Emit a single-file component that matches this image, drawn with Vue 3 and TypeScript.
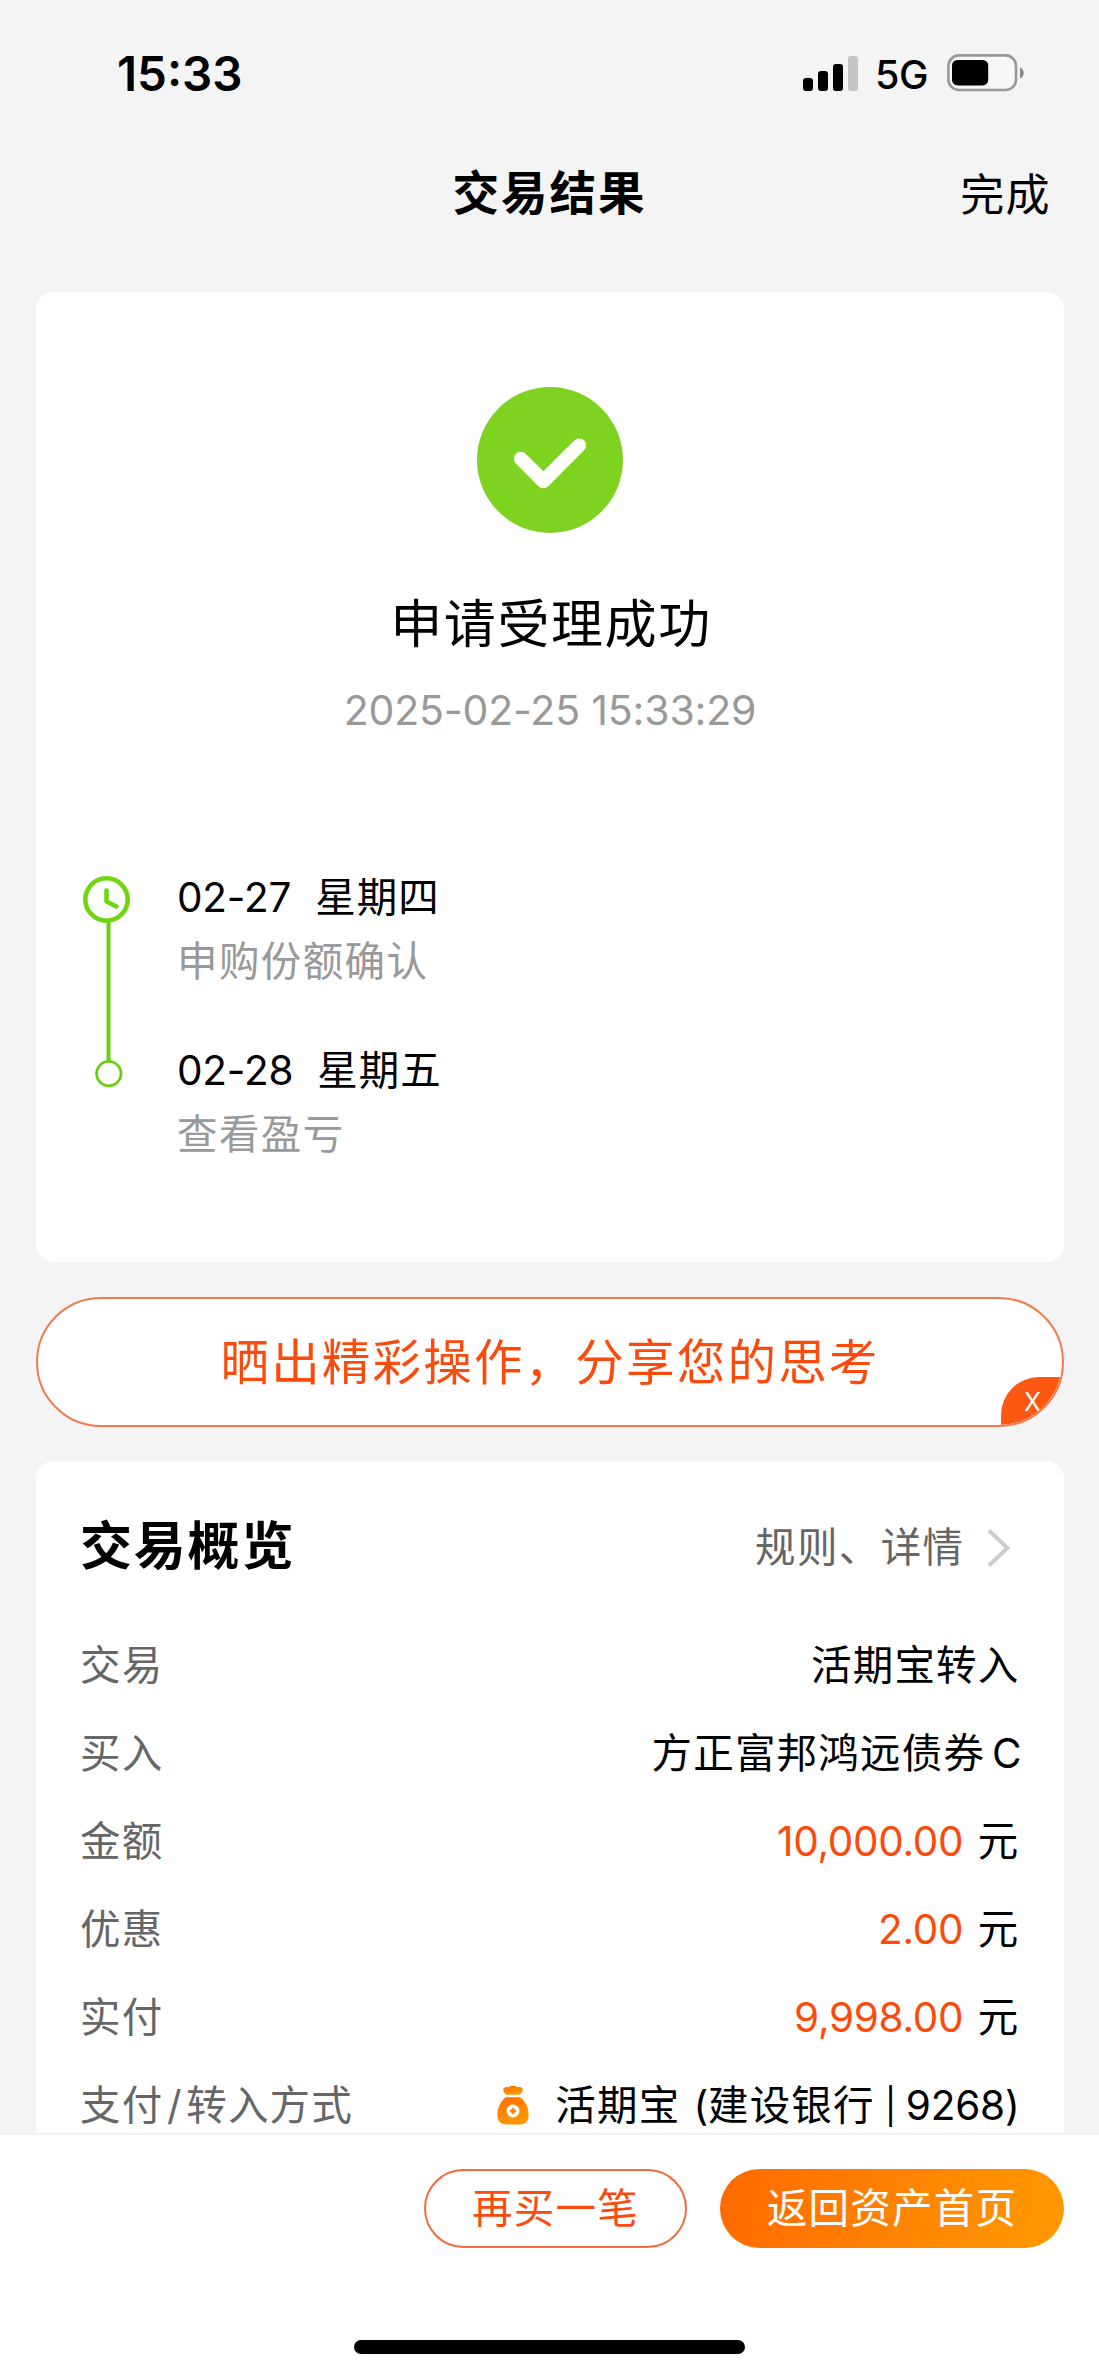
<script setup lang="ts">
interface Step {
  date: string
  weekday: string
  note: string
}

interface Row {
  label: string
  value?: string
  latin?: string
  amount?: string
}

const bars = [13, 20, 27, 35]

const steps: Step[] = [
  { date: '02-27', weekday: '星期四', note: '申购份额确认' },
  { date: '02-28', weekday: '星期五', note: '查看盈亏' },
]

const rows: Row[] = [
  { label: '交易', value: '活期宝转入' },
  { label: '买入', value: '方正富邦鸿远债券', latin: 'C' },
  { label: '金额', amount: '10,000.00' },
  { label: '优惠', amount: '2.00' },
  { label: '实付', amount: '9,998.00' },
]
</script>

<template>
  <div class="screen">
    <header class="status">
      <span class="time">15:33</span>
      <div class="status-right">
        <div class="signal">
          <i v-for="h in bars" :key="h" :style="{ height: h + 'px' }"></i>
        </div>
        <span class="net">5G</span>
        <svg class="battery" width="78" height="38" viewBox="0 0 78 38">
          <rect x="1.4" y="1.4" width="67.6" height="34.6" rx="10.5" fill="#f7f7f7" stroke="#999" stroke-width="2.6" />
          <rect x="5" y="6" width="36.2" height="25.4" rx="5.5" fill="#000" />
          <path d="M73 13.5c5 1.6 5 9.4 0 11z" fill="#8c8c8c" />
        </svg>
      </div>
    </header>

    <nav class="nav">
      <h1>交易结果</h1>
      <a class="done">完成</a>
    </nav>

    <main class="content">
      <section class="card result">
        <svg class="check" width="146" height="146" viewBox="0 0 440 440">
          <circle cx="220" cy="220" r="220" fill="#7ed321" />
          <path d="M132 216L200 284L308 176" fill="none" stroke="#fff" stroke-width="42" stroke-linecap="round" stroke-linejoin="round" />
        </svg>
        <h2>申请受理成功</h2>
        <time>2025-02-25 15:33:29</time>

        <div class="timeline">
          <svg class="track" width="48" height="214" viewBox="0 0 48 214">
            <path d="M25.5 46V186" stroke="#69cf12" stroke-width="4" />
            <circle cx="23.5" cy="23.5" r="21.2" fill="#fff" stroke="#70d60f" stroke-width="4.6" />
            <path d="M23.5 14.5V25.5L33.5 30.5" fill="none" stroke="#70d60f" stroke-width="4.6" stroke-linecap="round" stroke-linejoin="round" />
            <circle cx="25.8" cy="197.6" r="12.2" fill="#fff" stroke="#69cf12" stroke-width="2.8" />
          </svg>
          <ol>
            <li v-for="s in steps" :key="s.date">
              <div class="when"><span class="latin">{{ s.date }}</span><span class="weekday">{{ s.weekday }}</span></div>
              <div class="note">{{ s.note }}</div>
            </li>
          </ol>
        </div>
      </section>

      <section class="share">
        <span>晒出精彩操作，分享您的思考</span>
        <button class="close"><b>X</b></button>
      </section>

      <section class="card overview">
        <div class="head">
          <h3>交易概览</h3>
          <a class="more">
            规则、详情
            <svg width="24" height="40" viewBox="0 0 24 40">
              <path d="M2 2.5L20.5 20L2 37.5" fill="none" stroke="#ccc" stroke-width="4" />
            </svg>
          </a>
        </div>
        <div v-for="r in rows" :key="r.label" class="row">
          <span class="label">{{ r.label }}</span>
          <span v-if="r.amount" class="value"><span class="amount">{{ r.amount }}</span><span class="unit">元</span></span>
          <span v-else class="value">{{ r.value }}<span v-if="r.latin" class="latin suffix">{{ r.latin }}</span></span>
        </div>
        <div class="row">
          <span class="label">支付<span class="slash">/</span>转入方式</span>
          <span class="value pay">
            <svg class="bag" width="32" height="40" viewBox="0 0 32 40">
              <defs>
                <linearGradient id="bag" x1="0" y1="0" x2="0.4" y2="1">
                  <stop offset="0" stop-color="#ff6f00" />
                  <stop offset="1" stop-color="#ff9800" />
                </linearGradient>
              </defs>
              <path d="M9 9.800C8 8.300 6.200 7.200 6.200 4.600C6.200 2.200 9 1.400 11.400 2.300C12.800 .2 19.200 .2 20.600 2.300C23 1.400 25.800 2.200 25.800 4.600C25.800 7.200 24 8.300 23 9.800Z" fill="url(#bag)" />
              <path d="M9 12.300H23C28 15.500 31.600 22.500 31.600 29.500C31.600 36.500 28 39.500 22.500 39.500H9.500C4 39.500 .4 36.500 .4 29.500C.4 22.500 4 15.500 9 12.300Z" fill="url(#bag)" />
              <circle cx="16" cy="26" r="6.500" fill="#fff" />
              <path d="M16 22.600L19.400 26L16 29.400L12.600 26Z" fill="#ff8400" />
            </svg>
            <span>活期宝</span><span class="latin open">(</span><span>建设银行</span><span class="latin divider">|</span><span class="latin tail">9268)</span>
          </span>
        </div>
      </section>
    </main>

    <footer class="footer">
      <div class="actions">
        <button class="btn ghost">再买一笔</button>
        <button class="btn solid">返回资产首页</button>
      </div>
      <div class="home"></div>
    </footer>
  </div>
</template>

<style>
body {
  margin: 0;
}
</style>

<style scoped>
.screen {
  width: 1099px;
  height: 2377px;
  overflow: hidden;
  display: flex;
  flex-direction: column;
  background: #f4f4f4;
  color: #000;
  font-family: Inter, "Noto Sans CJK SC", sans-serif;
  font-size: 40.5px;
  letter-spacing: 1.2px;
}

h1, h2, h3, ol {
  margin: 0;
  padding: 0;
  list-style: none;
}

button {
  margin: 0;
  padding: 0;
  border: 0;
  background: none;
  font: inherit;
  letter-spacing: inherit;
}

.status {
  display: flex;
  justify-content: space-between;
  height: 146px;
  flex: none;
  padding: 0 74px 0 117px;
  box-sizing: border-box;
  align-items: center;
}

.time {
  font-size: 47.500px;
  font-weight: 600;
  letter-spacing: 0;
}

.status-right {
  display: flex;
  align-items: center;
}

.signal {
  display: flex;
  align-items: flex-end;
  gap: 5.500px;
  height: 35px;
}

.signal i {
  width: 9.600px;
  border-radius: 3px;
  background: #000;
}

.signal i:last-child {
  background: #c5c5c5;
}

.net {
  margin: 3px 0 0 17px;
  width: 72px;
  font-size: 39.500px;
  font-weight: 500;
  letter-spacing: -0.5px;
}

.battery {
  display: block;
  flex: none;
}

.nav {
  position: relative;
  flex: none;
  height: 146px;
  display: flex;
  justify-content: center;
}

h1 {
  font-size: 46.500px;
  line-height: 94px;
  font-weight: 700;
  letter-spacing: 2px;
}

.done {
  position: absolute;
  right: 48px;
  top: 0;
  font-size: 44px;
  line-height: 99px;
  letter-spacing: 1.400px;
}

.content {
  flex: 1;
  min-height: 0;
  overflow: hidden;
  display: flex;
  flex-direction: column;
  padding: 0 35px 0 36px;
}

.card {
  background: #fff;
  border-radius: 18px;
  flex: none;
}

.result {
  height: 970px;
  display: flex;
  flex-direction: column;
  align-items: center;
}

.check {
  display: block;
  margin-top: 95px;
}

h2 {
  margin-top: 60px;
  padding-left: 2px;
  font-size: 52px;
  font-weight: 400;
  line-height: 64px;
  letter-spacing: 1.600px;
}

time {
  margin-top: 29px;
  font-size: 41px;
  line-height: 48px;
  letter-spacing: -0.160px;
  color: #999;
}

.timeline {
  width: 100%;
  margin-top: 142px;
  padding-left: 46.500px;
  box-sizing: border-box;
  display: flex;
}

.track {
  display: block;
}

ol {
  margin: -10.500px 0 0 46.500px;
}

li {
  height: 173.500px;
}

.when,
.note {
  line-height: 64px;
  white-space: nowrap;
}

.when {
  letter-spacing: 1px;
}

.weekday {
  margin-left: 24px;
}

.note {
  color: #999;
  letter-spacing: 1.400px;
}

.latin {
  letter-spacing: -0.200px;
}

.share {
  position: relative;
  flex: none;
  height: 130px;
  margin: 34.500px 0;
  box-sizing: border-box;
  border: 2px solid #f4794e;
  border-radius: 65px;
  overflow: hidden;
  background: #fff;
  color: #fa4b0c;
  display: flex;
  justify-content: center;
  font-size: 48.500px;
  line-height: 127px;
  letter-spacing: 2.200px;
}

.close {
  position: absolute;
  right: -2px;
  bottom: -2px;
  width: 63px;
  height: 50px;
  border-radius: 38px 0 0 0;
  background: #fd5812;
  color: #fff;
  font-size: 25px;
  line-height: 50px;
  letter-spacing: 0;
}

.close b {
  font-weight: 400;
}

.overview {
  height: 760px;
  padding: 0 44.500px 0 44px;
}

.head {
  display: flex;
  justify-content: space-between;
  height: 160.500px;
  line-height: 172px;
}

h3 {
  font-size: 52px;
  font-weight: 700;
  letter-spacing: 1.800px;
}

.more {
  display: flex;
  align-items: center;
  height: 174px;
  color: #666;
  letter-spacing: 1.400px;
  padding-right: 9px;
}

.more svg {
  margin-left: 22px;
}

.row {
  display: flex;
  justify-content: space-between;
  height: 88.200px;
  line-height: 88.200px;
  white-space: nowrap;
}

.label {
  color: #666;
}

.slash {
  margin: 0 3.500px;
}

.amount {
  color: #fa4b0c;
  letter-spacing: -0.300px;
}

.unit {
  margin-left: 14.500px;
}

.suffix {
  margin: 0 -2px 0 7px;
}

.pay {
  display: flex;
}

.bag {
  margin: 23px 26px 0 0;
}

.open {
  margin-left: 13px;
}

/* the bar is set slightly smaller than the digits beside it */
.divider {
  margin: 0 9.500px 0 10px;
  font-size: 35px;
}

.footer {
  flex: none;
  height: 244px;
  box-sizing: border-box;
  border-top: 2px solid #f2f2f2;
  background: #fff;
  display: flex;
  flex-direction: column;
  align-items: center;
}

.actions {
  align-self: flex-end;
  display: flex;
  gap: 33px;
  margin: 33.500px 35px 0 0;
}

.btn {
  height: 79px;
  box-sizing: border-box;
  border-radius: 40px;
  line-height: 79px;
}

.ghost {
  width: 263px;
  border: 2px solid #f26b40;
  line-height: 75px;
  color: #fa4b0c;
}

.solid {
  width: 344px;
  background: linear-gradient(100deg, #ff6a00, #ff9a00);
  color: #fff;
}

.home {
  margin-top: 92px;
  width: 391px;
  height: 14px;
  border-radius: 7px;
  background: #000;
}
</style>
